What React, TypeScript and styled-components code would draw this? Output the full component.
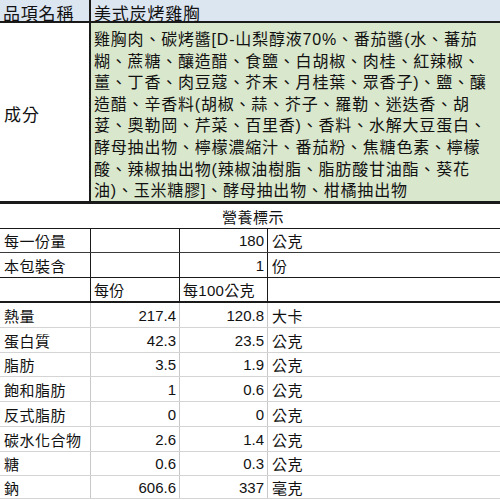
import React from "react";
import styled, { createGlobalStyle } from "styled-components";

const GlobalStyle = createGlobalStyle`
  html, body { margin: 0; padding: 0; background: #ffffff; }
  body {
    font-family: "Liberation Sans", "Noto Sans CJK TC", sans-serif;
    color: #111111;
  }
  * { box-sizing: border-box; }
`;

const Sheet = styled.div`
  width: 500px;
  display: flex;
  flex-direction: column;
`;

const HeaderRow = styled.div`
  display: grid;
  grid-template-columns: 91px 1fr;
  height: 23px;
  background: #dce6f1;
  border-bottom: 2px solid #1a1a1a;
`;

const HeaderCell = styled.div<{ $first?: boolean }>`
  display: flex;
  align-items: center;
  padding-left: 3px;
  font-size: 17px;
  letter-spacing: 0.8px;
  white-space: nowrap;
  border-right: ${(p) => (p.$first ? "2px solid #1a1a1a" : "none")};
`;

const IngredientRow = styled.div`
  display: grid;
  grid-template-columns: 91px 1fr;
  height: 181px;
  border-bottom: 3px solid #1a1a1a;
`;

const IngredientLabel = styled.div`
  display: flex;
  align-items: center;
  padding: 2px 0 0 4px;
  font-size: 17px;
  letter-spacing: 1px;
  border-right: 2px solid #1a1a1a;
  background: #ffffff;
`;

const IngredientText = styled.div`
  background: #d9e7cc;
  padding: 6px 0 0 3px;
  font-size: 16px;
  letter-spacing: 0.8px;
  line-height: 21.6px;
  white-space: nowrap;
  overflow: hidden;
`;

const Line = styled.div``;

const TitleRow = styled.div`
  height: 25px;
  display: flex;
  align-items: center;
  justify-content: center;
  font-size: 15px;
  letter-spacing: 0.5px;
  border-bottom: 1px solid #1a1a1a;
  padding-left: 6px;
`;

const DataRow = styled.div<{ $h: number; $line: string; $lineW: number; $vline: string }>`
  display: grid;
  grid-template-columns: 91px 89px 88px 1fr;
  height: ${(p) => p.$h}px;
  border-bottom: ${(p) => `${p.$lineW}px solid ${p.$line}`};
  & > div:not(:last-child) {
    border-right: 1px solid ${(p) => p.$vline};
  }
`;

const Label = styled.div`
  display: flex;
  align-items: center;
  padding-left: 4px;
  font-size: 15px;
  letter-spacing: 0.5px;
  white-space: nowrap;
`;

const Num = styled.div`
  display: flex;
  align-items: center;
  justify-content: flex-end;
  padding-right: 3px;
  font-size: 15px;
  white-space: nowrap;
`;

const ColHead = styled.div`
  display: flex;
  align-items: center;
  padding-left: 3px;
  font-size: 15px;
  letter-spacing: 0.3px;
  white-space: nowrap;
`;

const Unit = styled.div`
  display: flex;
  align-items: center;
  padding-left: 4px;
  font-size: 15px;
  letter-spacing: 0.5px;
  white-space: nowrap;
`;

const ingredientLines = [
  "雞胸肉、碳烤醬[D-山梨醇液70%、番茄醬(水、蕃茄",
  "糊、蔗糖、釀造醋、食鹽、白胡椒、肉桂、紅辣椒、",
  "薑、丁香、肉豆蔻、芥末、月桂葉、眾香子)、鹽、釀",
  "造醋、辛香料(胡椒、蒜、芥子、羅勒、迷迭香、胡",
  "荽、奧勒岡、芹菜、百里香)、香料、水解大豆蛋白、",
  "酵母抽出物、檸檬濃縮汁、番茄粉、焦糖色素、檸檬",
  "酸、辣椒抽出物(辣椒油樹脂、脂肪酸甘油酯、葵花",
  "油)、玉米糖膠]、酵母抽出物、柑橘抽出物",
];

const nutrients: { name: string; per: string; per100: string; unit: string; h: number }[] = [
  { name: "熱量", per: "217.4", per100: "120.8", unit: "大卡", h: 25 },
  { name: "蛋白質", per: "42.3", per100: "23.5", unit: "公克", h: 25 },
  { name: "脂肪", per: "3.5", per100: "1.9", unit: "公克", h: 24 },
  { name: "飽和脂肪", per: "1", per100: "0.6", unit: "公克", h: 25 },
  { name: "反式脂肪", per: "0", per100: "0", unit: "公克", h: 25 },
  { name: "碳水化合物", per: "2.6", per100: "1.4", unit: "公克", h: 25 },
  { name: "糖", per: "0.6", per100: "0.3", unit: "公克", h: 24 },
  { name: "鈉", per: "606.6", per100: "337", unit: "毫克", h: 23 },
];

export default function App() {
  return (
    <>
      <GlobalStyle />
      <Sheet>
        <HeaderRow>
          <HeaderCell $first>品項名稱</HeaderCell>
          <HeaderCell>美式炭烤雞胸</HeaderCell>
        </HeaderRow>
        <IngredientRow>
          <IngredientLabel>成分</IngredientLabel>
          <IngredientText>
            {ingredientLines.map((l, i) => (
              <Line key={i}>{l}</Line>
            ))}
          </IngredientText>
        </IngredientRow>
        <TitleRow>營養標示</TitleRow>
        <DataRow $h={24} $line="#3a3a3a" $lineW={1} $vline="#1a1a1a">
          <Label>每一份量</Label>
          <Num />
          <Num>180</Num>
          <Unit>公克</Unit>
        </DataRow>
        <DataRow $h={25} $line="#1a1a1a" $lineW={1} $vline="#1a1a1a">
          <Label>本包裝含</Label>
          <Num />
          <Num>1</Num>
          <Unit>份</Unit>
        </DataRow>
        <DataRow $h={25} $line="#1a1a1a" $lineW={2} $vline="#1a1a1a">
          <Label />
          <ColHead>每份</ColHead>
          <ColHead>每100公克</ColHead>
          <Unit />
        </DataRow>
        {nutrients.map((n) => (
          <DataRow key={n.name} $h={n.h} $line="#d4d4d4" $lineW={1} $vline="#c8c8c8">
            <Label>{n.name}</Label>
            <Num>{n.per}</Num>
            <Num>{n.per100}</Num>
            <Unit>{n.unit}</Unit>
          </DataRow>
        ))}
      </Sheet>
    </>
  );
}
